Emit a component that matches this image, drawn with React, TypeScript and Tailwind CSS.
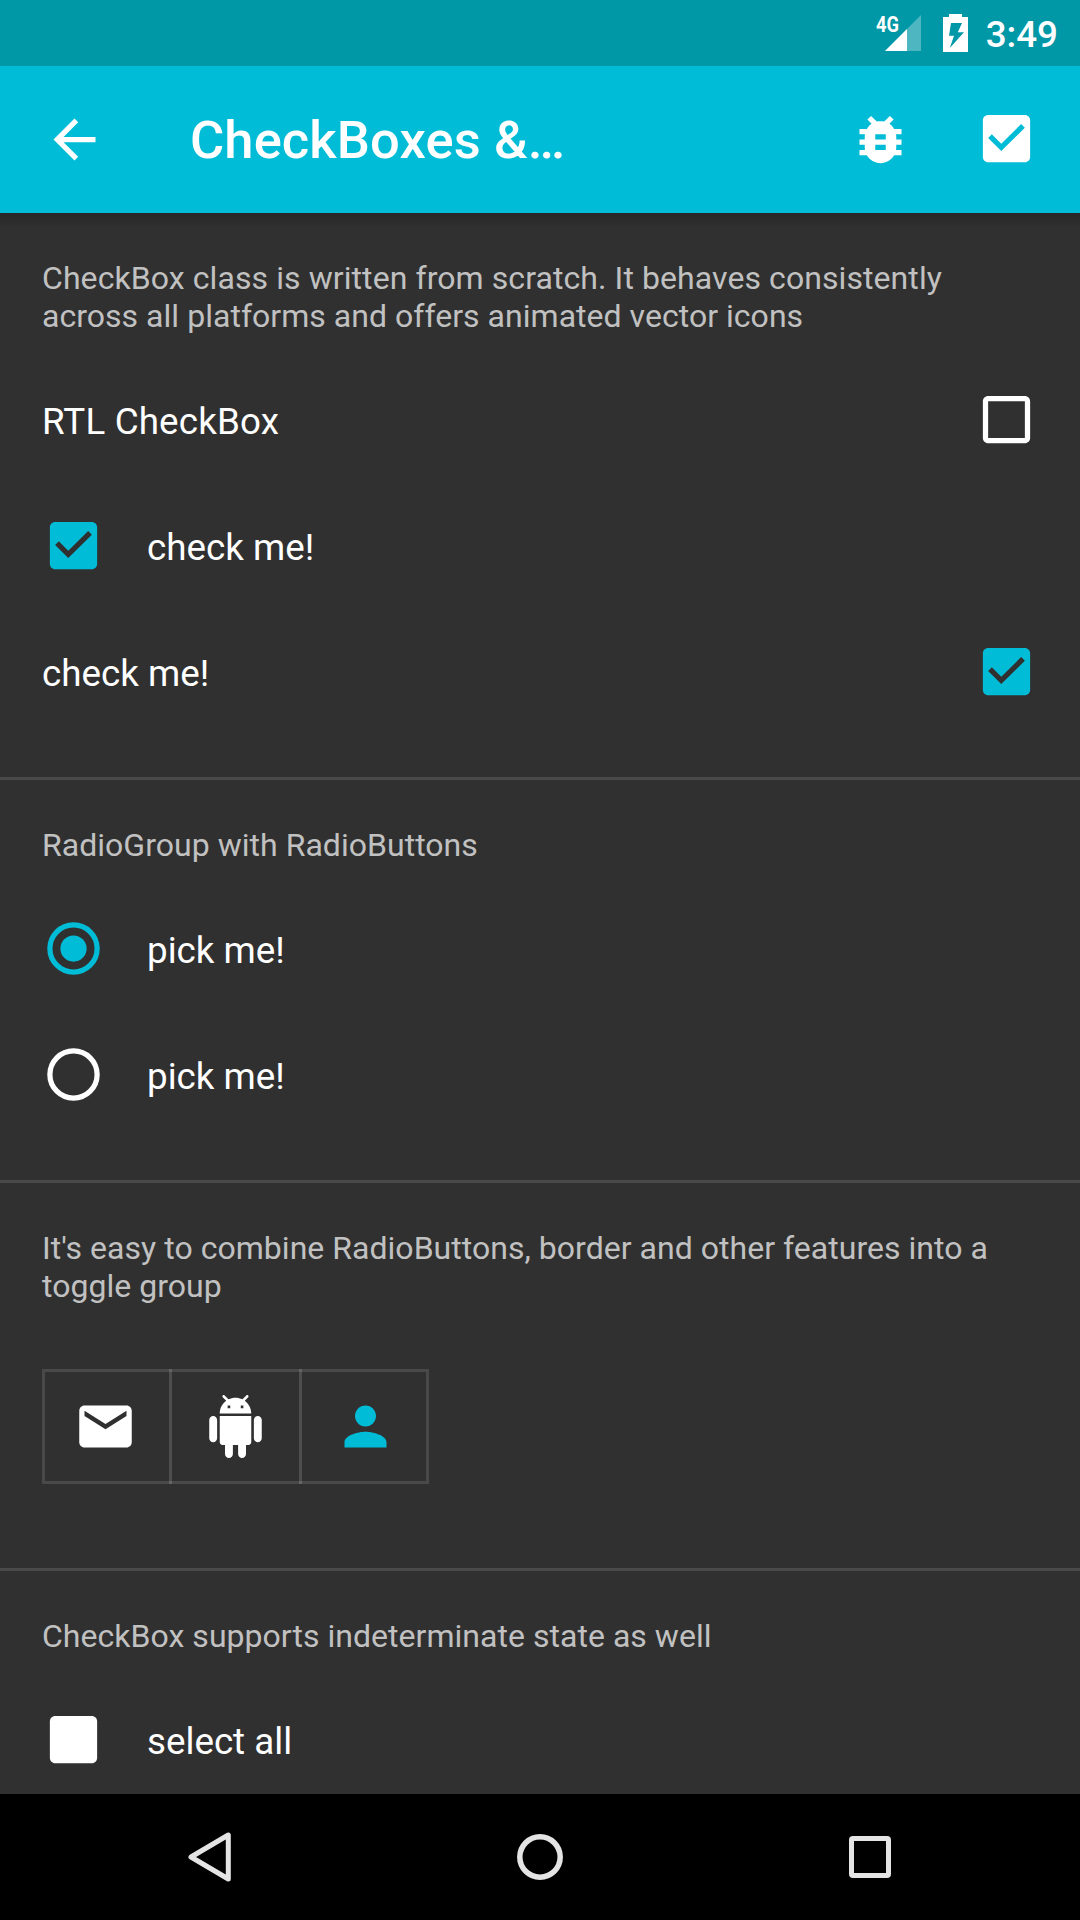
import type { ReactNode } from "react";

const BUG =
  "M20 8h-2.81c-.45-.78-1.07-1.45-1.82-1.96L17 4.41 15.59 3l-2.17 2.17C12.96 5.06 12.49 5 12 5c-.49 0-.96.06-1.41.17L8.41 3 7 4.41l1.62 1.63C7.88 6.55 7.26 7.22 6.81 8H4v2h2.09c-.05.33-.09.66-.09 1v1H4v2h2v1c0 .34.04.67.09 1H4v2h2.81c1.04 1.79 2.97 3 5.19 3s4.15-1.21 5.19-3H20v-2h-2.09c.05-.33.09-.66.09-1v-1h2v-2h-2v-1c0-.34-.04-.67-.09-1H20V8zm-6 8h-4v-2h4v2zm0-4h-4v-2h4v2z";
const BACK = "M20 11H7.83l5.59-5.59L12 4l-8 8 8 8 1.41-1.41L7.83 13H20v-2z";
const EMAIL =
  "M20 4H4c-1.1 0-1.99.9-1.99 2L2 18c0 1.1.9 2 2 2h16c1.1 0 2-.9 2-2V6c0-1.1-.9-2-2-2zm0 4l-8 5-8-5V6l8 5 8-5v2z";
const ANDROID =
  "M6 18c0 .55.45 1 1 1h1v3.5c0 .83.67 1.5 1.5 1.5s1.5-.67 1.5-1.5V19h2v3.5c0 .83.67 1.5 1.5 1.5s1.5-.67 1.5-1.5V19h1c.55 0 1-.45 1-1V8H6v10zM3.5 8C2.67 8 2 8.67 2 9.5v7c0 .83.67 1.5 1.5 1.5S5 17.33 5 16.5v-7C5 8.67 4.33 8 3.5 8zm17 0c-.83 0-1.5.67-1.5 1.5v7c0 .83.67 1.5 1.5 1.5s1.5-.67 1.5-1.5v-7c0-.83-.67-1.5-1.5-1.5zm-4.97-5.84l1.3-1.3c.2-.2.2-.51 0-.71-.2-.2-.51-.2-.71 0l-1.48 1.48C13.85 1.23 12.95 1 12 1c-.96 0-1.86.23-2.66.63L7.85.15c-.2-.2-.51-.2-.71 0-.2.2-.2.51 0 .71l1.31 1.31C6.97 3.26 6 5.01 6 7h12c0-1.99-.97-3.75-2.47-4.84zM10 5H9V4h1v1zm5 0h-1V4h1v1z";
const PERSON =
  "M12 12c2.21 0 4-1.79 4-4s-1.79-4-4-4-4 1.79-4 4 1.79 4 4 4zm0 2c-2.67 0-8 1.34-8 4v2h16v-2c0-2.66-5.33-4-8-4z";
const CHECKED =
  "M19 3H5c-1.1 0-2 .9-2 2v14c0 1.1.9 2 2 2h14c1.1 0 2-.9 2-2V5c0-1.1-.9-2-2-2zm-9 13.8l-5-5 1.41-1.41L10 13.97l7.59-7.49L19 7.9z";
const UNCHECKED =
  "M19 5v14H5V5h14m0-2H5c-1.1 0-2 .9-2 2v14c0 1.1.9 2 2 2h14c1.1 0 2-.9 2-2V5c0-1.1-.9-2-2-2z";
const FILLED = "M19 3H5c-1.1 0-2 .9-2 2v14c0 1.1.9 2 2 2h14c1.1 0 2-.9 2-2V5c0-1.1-.9-2-2-2z";

function Icon({ d, className = "" }: { d: string; className?: string }) {
  return (
    <svg viewBox="0 0 24 24" fill="currentColor" className={`size-[63px] shrink-0 ${className}`}>
      <path d={d} />
    </svg>
  );
}

function Radio({ checked = false }: { checked?: boolean }) {
  return (
    <svg
      viewBox="0 0 24 24"
      className={`mb-px size-[63px] shrink-0 ${checked ? "text-[#00bcd6]" : "text-white"}`}
    >
      <circle cx="12" cy="12" r="9" fill="none" stroke="currentColor" strokeWidth="2" />
      {checked && <circle cx="12" cy="12" r="5" fill="currentColor" />}
    </svg>
  );
}

function Section({ text, last = false, children }: { text: ReactNode; last?: boolean; children: ReactNode }) {
  return (
    <section className={last ? "" : "border-b-3 border-[#494949] pb-[42px]"}>
      <p className="px-[42px] pt-[46px] pb-[22px] text-[32px] leading-[38px] tracking-[.03px] whitespace-nowrap text-[#c1c1c1]">
        {text}
      </p>
      {children}
    </section>
  );
}

function Row({ label, control, end = false }: { label: ReactNode; control: ReactNode; end?: boolean }) {
  return (
    <div className={`flex h-[126px] items-center px-[42px] ${end ? "flex-row-reverse justify-between" : "gap-[42px]"}`}>
      {control}
      <span className="pt-[3px] text-[36.75px] leading-[43px] text-white">{label}</span>
    </div>
  );
}

function StatusBar() {
  return (
    <div className="flex h-[66px] shrink-0 items-start justify-end bg-[#0097a7] pr-[22px] text-white">
      <div className="relative mt-[14px] mr-[22px] h-[38px] w-[46px]">
        <span className="absolute -top-0.5 left-px origin-left scale-x-[.85] text-[21.5px] leading-[25px] font-bold">4G</span>
        <svg viewBox="0 0 46 38" className="h-[38px] w-[46px]">
          <path d="M46 1v36H10z" fill="white" fillOpacity=".3" />
          <path d="M32 15v22H10z" fill="white" />
        </svg>
      </div>
      <svg viewBox="0 0 25 38" className="mt-[14px] mr-[18px] h-[38px] w-[25px]">
        <path fillRule="evenodd" fill="white" d="M6 0h13v3h6v35H0V3h6zM8 9L6 21.7h5L6.8 34 21 18.3h-6.2L19 9z" />
      </svg>
      <span className="mt-[13px] text-[36.75px] leading-[43px] font-medium">3:49</span>
    </div>
  );
}

function Toolbar() {
  return (
    <header className="flex h-[147px] shrink-0 items-center bg-[#00bcd6] pr-[42px] pl-[43px] text-white">
      <Icon d={BACK} />
      <h1 className="ml-[84px] flex-1 text-[52.5px] leading-[62px] font-medium tracking-[.1px]">CheckBoxes &amp;…</h1>
      <Icon d={BUG} className="mr-[63px]" />
      <Icon d={CHECKED} className="mb-0.5" />
    </header>
  );
}

function NavigationBar() {
  return (
    <nav className="flex h-[126px] shrink-0 bg-black px-[45px]">
      <div className="flex flex-1 items-center justify-center">
        <svg viewBox="0 0 60 60" className="size-[60px]" fill="none" stroke="#e4e4e4" strokeWidth="5" strokeLinejoin="round">
          <path d="M48.3 8v44L11 30z" />
        </svg>
      </div>
      <div className="flex flex-1 items-center justify-center">
        <svg viewBox="0 0 60 60" className="size-[60px]" fill="none" stroke="#e4e4e4" strokeWidth="5.5">
          <circle cx="30" cy="30" r="20.2" />
        </svg>
      </div>
      <div className="flex flex-1 items-center justify-center">
        <div className="size-[42px] rounded-[4px] border-5 border-[#e4e4e4]" />
      </div>
    </nav>
  );
}

function ToggleGroup() {
  return (
    <div className="mt-[42px] mb-[42px] ml-[42px] flex h-[115px] w-[387px] border-3 border-white/12 text-white">
      <div className="flex w-[124px] items-center justify-center pb-px">
        <Icon d={EMAIL} className="mr-[3px]" />
      </div>
      <div className="-my-[3px] w-[3px] bg-white/15" />
      <div className="flex w-[127px] items-center justify-center pb-px">
        <Icon d={ANDROID} />
      </div>
      <div className="-my-[3px] w-[3px] bg-white/15" />
      <div className="flex w-[124px] items-center justify-center pb-px text-[#00bcd6]">
        <Icon d={PERSON} className="ml-[3px]" />
      </div>
    </div>
  );
}

export default function App() {
  return (
    <div className="flex h-[1920px] w-[1080px] flex-col overflow-hidden bg-[#303030] font-[Roboto,sans-serif]">
      <StatusBar />
      <Toolbar />
      <main className="relative min-h-0 flex-1 overflow-hidden">
        <div className="absolute inset-x-0 top-0 h-[14px] bg-linear-to-b from-black/20 to-transparent" />
        <Section
          text={
            <>
              <span className="tracking-[.08px]">CheckBox class is written from scratch. It behaves consistently</span>
              <br />
              across all platforms and offers animated vector icons
            </>
          }
        >
          <Row
            label={<span className="tracking-[.15px]">RTL CheckBox</span>}
            end
            control={<Icon d={UNCHECKED} className="mb-px text-white" />}
          />
          <Row label="check me!" control={<Icon d={CHECKED} className="mb-px text-[#00bcd6]" />} />
          <Row label="check me!" end control={<Icon d={CHECKED} className="mb-px text-[#00bcd6]" />} />
        </Section>
        <Section text="RadioGroup with RadioButtons">
          <Row label="pick me!" control={<Radio checked />} />
          <Row label="pick me!" control={<Radio />} />
        </Section>
        <Section
          text={
            <>
              It's easy to combine RadioButtons, border and other features into a
              <br />
              toggle group
            </>
          }
        >
          <ToggleGroup />
        </Section>
        <Section text="CheckBox supports indeterminate state as well" last>
          <Row label="select all" control={<Icon d={FILLED} className="mb-px text-white" />} />
        </Section>
      </main>
      <NavigationBar />
    </div>
  );
}
